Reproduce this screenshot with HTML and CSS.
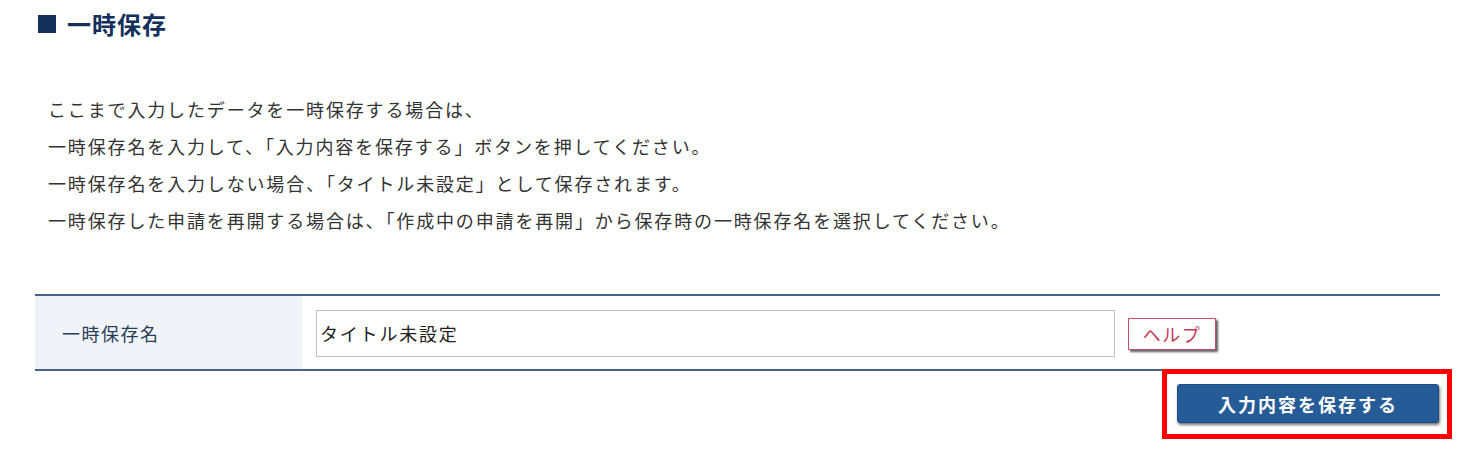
FILE: index.html
```html
<!DOCTYPE html>
<html lang="ja">
<head>
<meta charset="utf-8">
<title>一時保存</title>
<link rel="stylesheet" href="styles.css">
</head>
<body>
<div class="page">
  <h2 class="heading"><span class="heading-mark"></span>一時保存</h2>
  <div class="desc">
    <p>ここまで入力したデータを一時保存する場合は、</p>
    <p>一時保存名を入力して、「入力内容を保存する」ボタンを押してください。</p>
    <p>一時保存名を入力しない場合、「タイトル未設定」として保存されます。</p>
    <p>一時保存した申請を再開する場合は、「作成中の申請を再開」から保存時の一時保存名を選択してください。</p>
  </div>
  <div class="form-table">
    <div class="form-label">一時保存名</div>
    <div class="form-value">
      <input class="name-input" type="text" value="タイトル未設定">
      <button class="help-btn" type="button">ヘルプ</button>
    </div>
  </div>
  <div class="actions">
    <div class="save-wrap">
      <button class="save-btn" type="button">入力内容を保存する</button>
    </div>
  </div>
</div>
</body>
</html>
```

FILE: styles.css
```css
html, body {
  margin: 0;
  padding: 0;
  background: #ffffff;
}
body {
  font-family: "Noto Sans CJK JP", "Noto Sans", sans-serif;
  color: #333333;
}
.page {
  width: 1405px;
  margin-left: 35px;
  padding-bottom: 24px;
}
.heading {
  display: flex;
  align-items: center;
  gap: 11px;
  margin: 9px 0 0 3px;
  height: 30px;
  font-size: 24px;
  font-weight: 700;
  line-height: 30px;
  color: #14305a;
  letter-spacing: 1px;
}
.heading-mark {
  display: inline-block;
  width: 18px;
  height: 18px;
  background: #14305a;
}
.desc {
  margin-top: 52px;
  padding-left: 13px;
}
.desc p {
  margin: 0;
  font-size: 18px;
  line-height: 37px;
  letter-spacing: 1.85px;
  color: #333333;
}
.form-table {
  display: flex;
  margin-top: 55px;
  border-top: 2px solid #46648a;
  border-bottom: 2px solid #46648a;
  height: 73px;
}
.form-label {
  width: 240px;
  padding-left: 27px;
  background: #f0f4f8;
  display: flex;
  align-items: center;
  font-size: 18px;
  letter-spacing: 1.5px;
  color: #2a3e58;
}
.form-value {
  flex: 1;
  display: flex;
  align-items: center;
  padding-left: 14px;
  gap: 13px;
}
.name-input {
  box-sizing: border-box;
  width: 799px;
  height: 47px;
  margin-top: 1px;
  border: 1px solid #bfc0c8;
  padding: 0 0 0 3px;
  font-family: "Noto Sans CJK JP", "Noto Sans", sans-serif;
  font-size: 18px;
  letter-spacing: 1.8px;
  color: #222222;
  background: #ffffff;
  outline: none;
}
.help-btn {
  box-sizing: border-box;
  width: 88px;
  height: 32px;
  margin-top: 2px;
  padding: 0;
  border: 1px solid #c9506a;
  background: #ffffff;
  color: #c43a5c;
  font-family: "Noto Sans CJK JP", "Noto Sans", sans-serif;
  font-size: 18px;
  letter-spacing: 1.5px;
  line-height: 28px;
  box-shadow: 2px 2px 2px rgba(40, 40, 40, 0.75);
  cursor: pointer;
}
.actions {
  display: flex;
  justify-content: flex-end;
  margin-right: -12px;
}
.save-wrap {
  margin-top: -2px;
  border: 5px solid #ff0000;
  padding: 10px 8px 11px 10px;
  background: transparent;
}
.save-btn {
  display: block;
  box-sizing: border-box;
  width: 262px;
  height: 39px;
  padding: 0;
  border: 1px solid #1d4c80;
  border-radius: 3px;
  background: #255b97;
  color: #ffffff;
  font-family: "Noto Sans CJK JP", "Noto Sans", sans-serif;
  font-size: 18px;
  font-weight: 700;
  letter-spacing: 2px;
  box-shadow: 1px 2px 3px rgba(0, 0, 0, 0.55);
  cursor: pointer;
}
```
